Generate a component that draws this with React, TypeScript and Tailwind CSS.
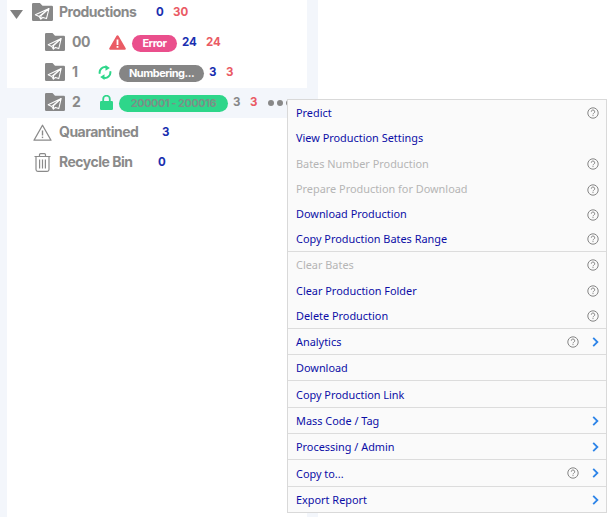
import React from "react";

const Folder = ({ w = 20, h = 18 }: { w?: number; h?: number }) => (
  <svg width={w} height={h} viewBox="0 0 20 18" preserveAspectRatio="none" className="shrink-0">
    <path d="M0 1.2 Q0 0 1.2 0 H7.5 L10 2.8 H18.8 Q20 2.8 20 4 V16.8 Q20 18 18.8 18 H1.2 Q0 18 0 16.8 Z" fill="#888888" />
    <path d="M16.2 5.5 L3.2 11.8 L6.8 13.4 L8.4 16.2 L10.4 14.4 L13.8 15.6 Z M6.8 13.4 L16.2 5.5 M8.4 16.2 L8.6 12.6 L16.2 5.5" fill="none" stroke="#fff" strokeWidth="1.05" strokeLinejoin="round" />
  </svg>
);

const Help = () => (
  <svg width="12" height="12" viewBox="0 0 12 12" className="shrink-0">
    <circle cx="6" cy="6" r="5.2" fill="none" stroke="#858585" strokeWidth="1" />
    <path d="M4.3 4.7 A1.7 1.7 0 1 1 6.8 6.2 Q6 6.6 6 7.3" fill="none" stroke="#858585" strokeWidth="1" />
    <rect x="5.5" y="8.1" width="1" height="1" fill="#858585" />
  </svg>
);

const Chevron = () => (
  <svg width="7" height="10" viewBox="0 0 7 10" className="shrink-0">
    <path d="M1.2 0.8 L5.4 5 L1.2 9.2" fill="none" stroke="#2d84e8" strokeWidth="1.8" />
  </svg>
);

type Item = { t: string; help?: boolean; off?: boolean; sub?: boolean; h: string; line?: boolean; low?: boolean };
const items: Item[] = [
  { t: "Predict", help: true, h: "h-[26px]" },
  { t: "View Production Settings", h: "h-[25px]" },
  { t: "Bates Number Production", help: true, off: true, h: "h-[26px]" },
  { t: "Prepare Production for Download", help: true, off: true, h: "h-[25px]" },
  { t: "Download Production", help: true, h: "h-[25px]" },
  { t: "Copy Production Bates Range", help: true, h: "h-[25px]", line: true },
  { t: "Clear Bates", help: true, off: true, h: "h-[26px]" },
  { t: "Clear Production Folder", help: true, h: "h-[26px]" },
  { t: "Delete Production", help: true, h: "h-[25px]", line: true },
  { t: "Analytics", help: true, sub: true, h: "h-[26px]", line: true, low: true },
  { t: "Download", h: "h-[26px]", line: true, low: true },
  { t: "Copy Production Link", h: "h-[27px]", line: true, low: true },
  { t: "Mass Code / Tag", sub: true, h: "h-[26px]", line: true, low: true },
  { t: "Processing / Admin", sub: true, h: "h-[26px]", line: true, low: true },
  { t: "Copy to...", help: true, sub: true, h: "h-[27px]", line: true, low: true },
  { t: "Export Report", sub: true, h: "h-[25px]", low: true },
];

const Row = ({ cls, children }: { cls: string; children: React.ReactNode }) => (
  <div className={`flex items-center h-[30px] ${cls}`}>{children}</div>
);
const Name = ({ cls, children }: { cls: string; children: React.ReactNode }) => (
  <span className={`text-[14px] font-bold tracking-[-0.5px] text-[#8a8a8a] leading-none shrink-0 ${cls}`}>{children}</span>
);
const Num = ({ cls, children }: { cls: string; children: React.ReactNode }) => (
  <span className={`text-[11.5px] font-bold leading-none shrink-0 mt-[2px] ${cls}`}>{children}</span>
);
const Pill = ({ cls, children }: { cls: string; children: React.ReactNode }) => (
  <span className={`h-[17px] mt-[3px] rounded-full text-[11px] font-bold tracking-[-0.5px] flex items-center justify-center leading-none shrink-0 ${cls}`}>{children}</span>
);

export default function App() {
  return (
    <div className="relative w-[609px] h-[517px] bg-white overflow-hidden font-['Inter',sans-serif]">
      <div className="flex flex-col h-full w-[318px] bg-[#f3f6fb]">
        <div className="ml-[7px] w-[300px] bg-white h-[91px] -mt-[3px] shrink-0">
          <Row cls="">
            <svg width="13" height="9" viewBox="0 0 13 9" className="ml-[3px] mr-[9px] mt-[4px] shrink-0"><path d="M0 0 H13 L6.5 9 Z" fill="#808080" /></svg>
            <Folder w={21} h={18} />
            <Name cls="ml-[6px] w-[97px]">Productions</Name>
            <Num cls="text-[#1a2fb0] w-[17px]">0</Num>
            <Num cls="text-[#ea5b64]">30</Num>
          </Row>
          <Row cls="">
            <div className="ml-[38px]"><Folder /></div>
            <Name cls="ml-[7px] w-[37px]">00</Name>
            <svg width="17" height="15" viewBox="0 0 17 15" className="shrink-0">
              <path d="M8.5 0.3 Q9.2 0.3 9.6 1 L16.7 13.2 Q17.2 14.6 15.7 14.8 H1.3 Q-0.2 14.6 0.3 13.2 L7.4 1 Q7.8 0.3 8.5 0.3 Z" fill="#ea5b64" />
              <rect x="7.6" y="4.5" width="1.8" height="5.5" fill="#fff" />
              <rect x="7.6" y="11" width="1.8" height="1.8" fill="#fff" />
            </svg>
            <Pill cls="ml-[6px] w-[45px] bg-[#ea4f8c] text-white">Error</Pill>
            <Num cls="ml-[5px] w-[24px] text-[#1a2fb0]">24</Num>
            <Num cls="text-[#ea5b64]">24</Num>
          </Row>
          <Row cls="">
            <div className="ml-[38px]"><Folder /></div>
            <Name cls="ml-[7px] w-[26px]">1</Name>
            <svg width="14" height="15" viewBox="0 0 14 15" className="shrink-0">
              <path d="M1.8 8.8 A5.4 5.4 0 0 1 8.8 2.4" fill="none" stroke="#2ed68a" strokeWidth="2" />
              <path d="M7.5 0 L11.8 2.9 L7.5 5.8 Z" fill="#2ed68a" />
              <path d="M12.2 6.2 A5.4 5.4 0 0 1 5.2 12.6" fill="none" stroke="#2ed68a" strokeWidth="2" />
              <path d="M6.5 15 L2.2 12.1 L6.5 9.2 Z" fill="#2ed68a" />
            </svg>
            <Pill cls="ml-[7px] w-[85px] bg-[#858585] text-white">Numbering...</Pill>
            <Num cls="ml-[5px] w-[17px] text-[#1a2fb0]">3</Num>
            <Num cls="text-[#ea5b64]">3</Num>
          </Row>
        </div>
        <Row cls="shrink-0 pl-[7px] pb-[2px]">
          <div className="ml-[38px]"><Folder /></div>
          <Name cls="ml-[7px] w-[28px]">2</Name>
          <svg width="13" height="15" viewBox="0 0 13 15" className="shrink-0">
            <path d="M3.2 7 V4 A3.3 3.3 0 0 1 9.8 4 V7" fill="none" stroke="#2ed68a" strokeWidth="1.8" />
            <rect x="0" y="6" width="13" height="9" rx="1.2" fill="#2ed68a" />
          </svg>
          <Pill cls="ml-[6px] w-[109px] bg-[#2ed68a] text-[#7a9187]">200001 - 200016</Pill>
          <Num cls="ml-[5px] w-[17px] text-[#888888]">3</Num>
          <Num cls="text-[#ea5b64] w-[18px]">3</Num>
          <span className="flex gap-[3px] mt-[2px] shrink-0">
            <i className="w-[6px] h-[6px] rounded-full bg-[#888888]" />
            <i className="w-[6px] h-[6px] rounded-full bg-[#888888]" />
            <i className="w-[6px] h-[6px] rounded-full bg-[#888888]" />
          </span>
        </Row>
        <div className="ml-[7px] w-[300px] bg-white flex-1">
          <div className="-mt-[1px]">
            <Row cls="">
              <div className="ml-[26px] w-[19px] flex justify-center">
                <svg width="19" height="17" viewBox="0 0 19 17" className="shrink-0">
                  <path d="M9.5 1.2 L18 16.2 H1 Z" fill="none" stroke="#8a8a8a" strokeWidth="1.3" strokeLinejoin="round" />
                  <rect x="8.8" y="6.5" width="1.4" height="5" fill="#8a8a8a" />
                  <rect x="8.8" y="12.6" width="1.4" height="1.5" fill="#8a8a8a" />
                </svg>
              </div>
              <Name cls="ml-[7px] w-[103px]">Quarantined</Name>
              <Num cls="text-[#1a2fb0]">3</Num>
            </Row>
            <Row cls="">
              <div className="ml-[26px] w-[19px] flex justify-center">
                <svg width="17" height="19" viewBox="0 0 17 19" className="shrink-0">
                  <path d="M0.5 3.5 H16.5 M5.5 3.5 V1.8 Q5.5 0.7 6.6 0.7 H10.4 Q11.5 0.7 11.5 1.8 V3.5 M2 3.5 V16.5 Q2 18.3 3.8 18.3 H13.2 Q15 18.3 15 16.5 V3.5 M5.6 6.5 V15.5 M8.5 6.5 V15.5 M11.4 6.5 V15.5" fill="none" stroke="#8a8a8a" strokeWidth="1.2" />
                </svg>
              </div>
              <Name cls="ml-[7px] w-[99px]">Recycle Bin</Name>
              <Num cls="text-[#1a2fb0]">0</Num>
            </Row>
          </div>
        </div>
      </div>
      <div className="absolute left-[287px] top-[99px] w-[320px] border border-[#d9d9d9] bg-[#fafafa] font-['Noto_Sans',sans-serif]">
        {items.map((it) => (
          <div key={it.t} className={`flex items-center pl-[8px] ${it.h} ${it.line ? "border-b border-[#dcdcdc]" : ""}`}>
            <span className={`text-[10.9px] flex-1 ${it.low ? "pt-[2px]" : ""} ${it.off ? "text-[#b5b5b5]" : "text-[#0c0ea6]"}`}>{it.t}</span>
            {it.help && <span className={it.sub ? "mr-[13px]" : "mr-[7px]"}><Help /></span>}
            {it.sub && <span className="mr-[7px]"><Chevron /></span>}
          </div>
        ))}
      </div>
    </div>
  );
}
